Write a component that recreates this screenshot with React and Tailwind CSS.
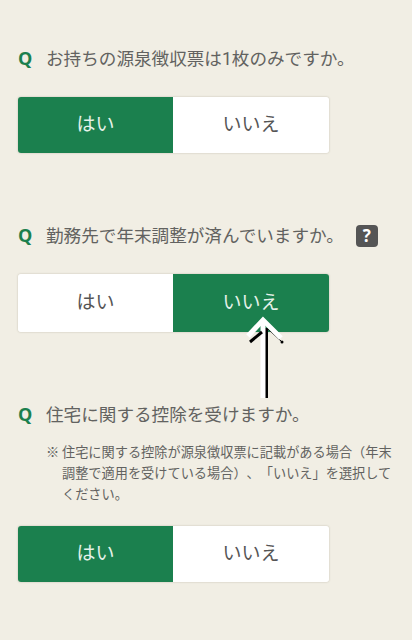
const FONT = "font-['Roboto','Noto_Sans_CJK_JP',sans-serif]";

// Two-way yes/no toggle
function YesNo({ value, tall }) {
  const base = "flex items-center justify-center text-[19px]";
  const on = "bg-[#1b804e] text-[#e6f2ea]";
  const off = "bg-white text-[#555555]";
  return (
    <div className={`flex w-[311px] overflow-hidden rounded-[3px] shadow-[0_0_2px_rgba(90,80,60,0.35)] ${tall ? "h-[58px]" : "h-[56px]"}`}>
      <div className={`${base} w-[155px] ${value === "yes" ? on : off}`}>はい</div>
      <div className={`${base} flex-1 ${value === "no" ? on : off}`}>いいえ</div>
    </div>
  );
}

function Question({ children, extra }) {
  return (
    <div className="flex h-[24px] items-center">
      <span className="mt-[-2px] w-[28px] font-['Open_Sans'] text-[18px] font-bold text-[#1b804e]">Q</span>
      <span className="text-[17.6px] leading-[24px] text-[#626260]">{children}</span>
      {extra}
    </div>
  );
}

export default function App() {
  return (
    <div className={`relative h-[640px] w-[412px] overflow-hidden bg-[#f1eee4] pl-[18px] pt-[47px] ${FONT}`}>
      <Question>お持ちの源泉徴収票は1枚のみですか。</Question>
      <div className="mt-[26px]">
        <YesNo value="yes" />
      </div>

      <div className="mt-[71px]">
        <Question
          extra={
            <span className="ml-[12px] flex h-[22px] w-[22px] items-center justify-center rounded-[4px] bg-[#555555] font-['Open_Sans'] text-[17px] font-bold text-white">
              ?
            </span>
          }
        >
          勤務先で年末調整が済んでいますか。
        </Question>
      </div>
      <div className="mt-[26px]">
        <YesNo value="no" tall />
      </div>

      <div className="mt-[71px]">
        <Question>住宅に関する控除を受けますか。</Question>
      </div>
      <div className="mt-[15px] flex pl-[28px] text-[13.2px] leading-[21px] text-[#626260] [text-spacing-trim:space-all]">
        <span className="w-[16px] shrink-0">※</span>
        <p className="w-[332px] shrink-0">
          住宅に関する控除が源泉徴収票に記載がある場合（年末調整で適用を受けている場合）、「いいえ」を選択してください。
        </p>
      </div>
      <div className="mt-[21px]">
        <YesNo value="yes" />
      </div>

      {/* annotation arrow */}
      <svg className="absolute left-[240px] top-[302px]" width="50" height="100" viewBox="0 0 50 100" fill="none">
        <path d="M26.5 26V96" stroke="#000" strokeWidth="3" />
        <path d="M23 20V96" stroke="#fff" strokeWidth="5" />
        <path d="M10 40L22 30" stroke="#000" strokeWidth="3" />
        <path d="M27 26L42 40" stroke="#000" strokeWidth="1" />
        <path d="M8 34L23 18L41 36" stroke="#fff" strokeWidth="5" />
        <circle cx="42" cy="40" r="1.5" fill="#000" />
      </svg>
    </div>
  );
}
